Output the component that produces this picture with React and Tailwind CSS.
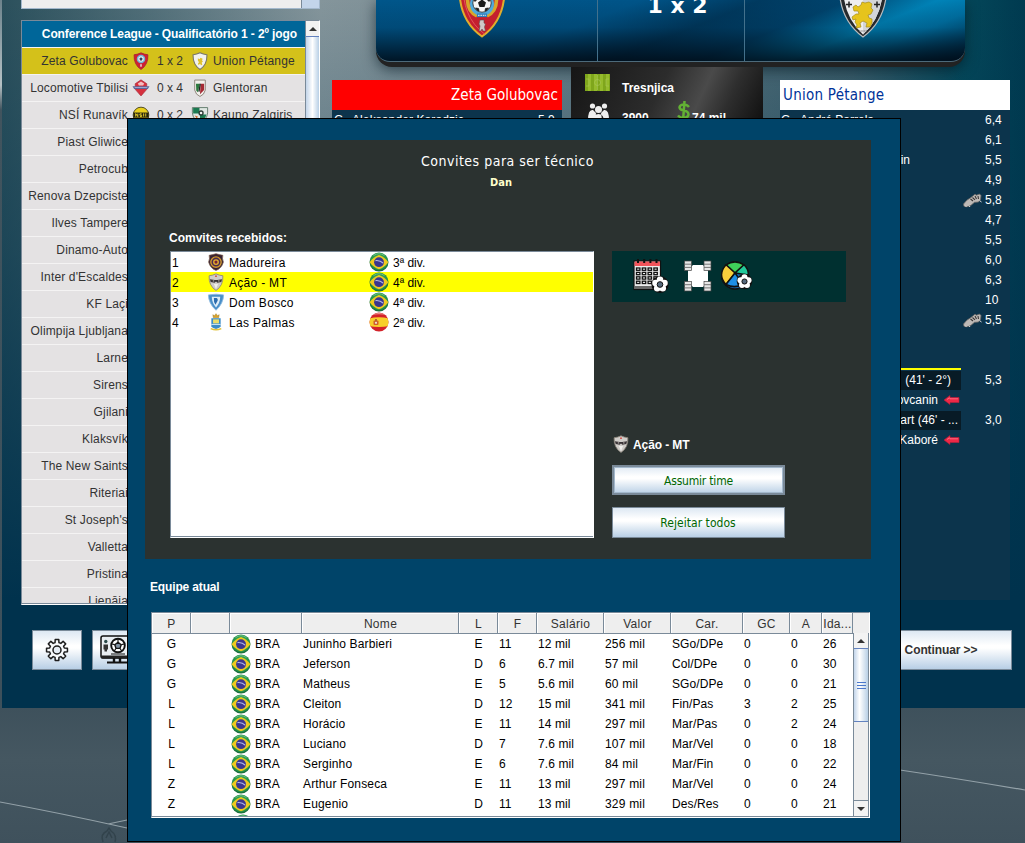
import React from "react";

const ARIAL = "font-['Liberation_Sans',Arial,sans-serif]";
const TAHOMA = "font-['DejaVu_Sans_Condensed','DejaVu_Sans',sans-serif]";

/* ---------- flags and crests ---------- */

function Brazil() {
  return (
    <svg width="20" height="20" viewBox="0 0 20 20" className="block shrink-0">
      <defs>
        <radialGradient id="br" cx=".5" cy=".45" r=".55">
          <stop offset="0" stopColor="#4cc266" />
          <stop offset=".8" stopColor="#259449" />
          <stop offset="1" stopColor="#0f5c34" />
        </radialGradient>
      </defs>
      <circle cx="10" cy="10" r="9.5" fill="url(#br)" />
      <path d="M.6 10.2 Q4.5 5 10 3 Q15.500 5 19.400 10.2 Q15.500 15.400 10 17.200 Q4.500 15.400 .6 10.2Z" fill="#efc91e" />
      <circle cx="10" cy="10.200" r="4.900" fill="#3b3690" />
      <path d="M6.500 8.600 Q11 8 14.200 11.200" stroke="#b4b8e0" strokeWidth="1.200" fill="none" />
      <path d="M4.500 3.600 Q10 -.2 15.500 3.600" stroke="#9fd9ae" strokeWidth="1" fill="none" opacity=".6" />
    </svg>
  );
}

function Spain() {
  return (
    <svg width="20" height="20" viewBox="0 0 20 20" className="block shrink-0">
      <defs>
        <clipPath id="esc"><circle cx="10" cy="10" r="9.5" /></clipPath>
      </defs>
      <g clipPath="url(#esc)">
        <rect width="20" height="20" fill="#d3222a" />
        <path d="M0 6.500Q10 4 20 6.500v7.500Q10 16 0 14z" fill="#f7cf2a" />
        <path d="M2 3Q10-1 18 3 10 1.500 2 3z" fill="#f4b0a8" opacity=".8" />
        <rect x="4.500" y="8.500" width="5" height="4.500" rx="1" fill="#d0602c" />
        <rect x="6" y="7" width="2" height="2" fill="#b8642c" />
        <circle cx="7" cy="10.800" r="1.100" fill="#eee3d0" />
      </g>
    </svg>
  );
}

const SHIELD = "M1.500 2.600 Q5 2.300 8 .8 Q11 2.300 14.500 2.600 Q15 12 8 16.500 Q1 12 1.500 2.600Z";

function Crest({ kind }) {
  return (
    <svg width="18" height="18" viewBox="0 0 16 17" className="block shrink-0">
      {kind === "zeta" && (
        <>
          <path d={SHIELD} fill="#cf1f33" stroke="#a32334" strokeWidth=".8" />
          <circle cx="8" cy="6.600" r="4" fill="#6fb4d4" />
          <circle cx="8" cy="6.600" r="2.600" fill="#e6eef2" />
          <path d="M8 5l1.500 1.200-.6 1.800H7.100L6.500 6.200z" fill="#33415c" />
          <rect x="7.200" y="11.500" width="1.600" height="2.400" fill="#dfc9c9" />
        </>
      )}
      {kind === "union" && (
        <>
          <path d={SHIELD} fill="#f2f2ee" stroke="#77756a" strokeWidth="1" />
          <path d="M6 6l1.500.8L8.500 5.500l2 .8-.6 1.700.9 1-1.200 1 .6 2-1.300.6-.8-1.400-1.500 1-.6-1 1-1.500-1-1.600z" fill="#dfc22c" />
        </>
      )}
      {kind === "loco" && (
        <>
          <path d="M8 .8L13.500 4.500 13.300 10 8 16 2.700 10 2.500 4.500z" fill="#d6303e" stroke="#a32837" strokeWidth=".6" />
          <path d="M5 4.300l3-2 3 2-1 1.800H6z" fill="#f3bcc0" />
          <path d="M0 6.800h16l-1.500 2.700h-13z" fill="#5b6498" />
          <path d="M2 8h12" stroke="#b9bfe2" strokeWidth=".7" />
        </>
      )}
      {kind === "glen" && (
        <>
          <path d="M3 1h10v9.500Q12 15 8 16.500 4 15 3 10.500z" fill="#f3f1ec" stroke="#8b8277" strokeWidth=".9" />
          <path d="M4.200 4.500H8L6 12.500 4.500 11z" fill="#2c7a3e" />
          <path d="M8.600 4.500h3.300v6L8 14.300z" fill="#a52a34" />
          <path d="M8.300 4.500L7 12" stroke="#222" strokeWidth="1.200" />
        </>
      )}
      {kind === "nsi" && (
        <>
          <circle cx="8" cy="8.500" r="7.400" fill="#e9cf1c" stroke="#38340f" strokeWidth=".8" />
          <path d="M.9 6.200h14.200v4.800H.9z" fill="#26240f" />
          <path d="M3 10V7.200l2 2.800V7.200M8.600 7.400H7v1.300h1.600V10H7M10.500 7v3M12.500 7v3" stroke="#ecd42c" strokeWidth=".9" fill="none" />
        </>
      )}
      {kind === "kauno" && (
        <>
          <path d="M.8 1.500h14.400v5Q14.500 13 8 16.500 1.500 13 .8 6.500z" fill="#dfe7e2" stroke="#53705f" strokeWidth=".8" />
          <path d="M1.500 2h6v5h-6zM8 8h6q-1 5-6 7z" fill="#1c7a50" />
          <circle cx="9" cy="6.600" r="2.500" fill="#2b3c36" />
          <circle cx="9" cy="6.600" r="1.200" fill="#f4f6f4" />
          <path d="M3 9l3 1-1 2z" fill="#d66b2c" />
        </>
      )}
      {kind === "madu" && (
        <>
          <path d="M1.500 2.200L5 1.500 8 .6l3 .9 3.500.7Q13.600 5 15 8.500 13.500 14.500 8 16.500 2.500 14.500 1 8.500 2.400 5 1.500 2.200z" fill="#3a2434" stroke="#7a5a46" strokeWidth=".6" />
          <circle cx="8" cy="8.600" r="4.900" fill="#4a2c50" stroke="#d39a2c" strokeWidth="1.300" />
          <circle cx="8" cy="8.600" r="2.800" fill="#e2b02e" />
          <circle cx="8" cy="8.600" r="1.500" fill="#7a2038" />
        </>
      )}
      {kind === "acao" && (
        <>
          <path d={SHIELD} fill="#d0cdc9" stroke="#8a8378" strokeWidth=".8" />
          <path d="M2.200 5.800L7 6.600h2l4.800-.8-.8 2.800-3.600.6L8 8 6.600 9.200 3 8.600z" fill="#3a3436" />
          <path d="M5 7.500h1.300M10 7.500h1.300" stroke="#e8e4e0" strokeWidth=".8" />
          <circle cx="8" cy="3" r=".8" fill="#d04038" />
          <path d="M6 10.500l2 4.500 2-4.500" fill="#f1f0ec" />
        </>
      )}
      {kind === "bosco" && (
        <>
          <path d="M.8 1.800Q8 .4 15.200 1.800 15 10 8 16.300 1 10 .8 1.800z" fill="#4a8fc9" stroke="#8fbbe0" strokeWidth=".8" />
          <path d="M4 3.600h8Q11.800 9.500 8 13.600 4.200 9.500 4 3.600z" fill="#dcecf8" />
          <path d="M6 4.800h2.600q2.200 1.500 0 4.200L7.500 11 6.200 8.600z" fill="#2c6cae" />
        </>
      )}
      {kind === "palmas" && (
        <>
          <path d="M5 1.600l1.500 1L8 .6l1.500 2 1.500-1-.5 3h-5z" fill="#d9a42c" stroke="#93701c" strokeWidth=".4" />
          <path d="M3.600 5h8.800v8Q11 14.500 8 15 5 14.500 3.600 13z" fill="#3a8cc8" />
          <rect x="5.200" y="6" width="5.600" height="3.800" fill="#e8dc6a" />
          <path d="M3.600 10.800h8.800" stroke="#d8ecf8" strokeWidth=".9" />
          <path d="M3 14.800q5 2.200 10 0" stroke="#e0c23c" strokeWidth="1.400" fill="none" />
        </>
      )}
    </svg>
  );
}

function BigZeta() {
  return (
    <svg width="48" height="68" viewBox="0 0 48 68" className="block">
      <path d="M2 10 Q14 8 24 2 Q34 8 46 10 Q50 48 24 66.500 Q-2 48 2 10Z" fill="#c41f2e" stroke="#dfae2c" strokeWidth="2" />
      <path d="M2.500 12Q1 48 24 65" stroke="#e2525a" strokeWidth="1" fill="none" transform="translate(2.500 -1)" />
      <path d="M9.500 28Q9 41 19 46M38.500 28Q39 41 29 46" stroke="#d8a62a" strokeWidth="3.600" fill="none" />
      <circle cx="24" cy="34" r="12" fill="#4fa9dc" />
      <circle cx="24" cy="33" r="9.200" fill="#f5f5f5" stroke="#222" strokeWidth=".8" />
      <path d="M24 29.500l4 3-1.500 4.500h-5L20 32.500z" fill="#1a1a1a" />
      <path d="M15.500 29.500l2.800-2.500.7 2.500-2 2zM32.500 29.500L29.700 27l-.7 2.500 2 2zM17.500 38l3 .5.500 2.500-1.500-.5zM30.500 38l-3 .5-.5 2.500 1.500-.5z" fill="#1a1a1a" stroke="#1a1a1a" strokeWidth=".8" />
      <rect x="19" y="43.500" width="10" height="3.600" fill="#2f7fbc" />
      <path d="M20 45.300h8" stroke="#e6f0f8" strokeWidth="1" strokeDasharray="1.6 .8" />
      <path d="M22 50h4v3l1.500 1-1 3 1 4H25l-1-2-1 2h-2l1-5-1-2z" fill="#cfc8c8" stroke="#64484c" strokeWidth=".6" />
    </svg>
  );
}

function BigUnion() {
  return (
    <svg width="50" height="70" viewBox="0 0 50 70" className="block">
      <path d="M1.500 12 Q14 10 25 2 Q36 10 48.500 12 Q51 50 25 69 Q-1 50 1.500 12Z" fill="#26292c" stroke="#b9bcbe" strokeWidth="1.200" />
      <path d="M5 14 Q16 12 25 6 Q34 12 45 14 Q46 48 25 66.500 Q4 48 5 14Z" fill="#eeeeef" />
      <path d="M25 6 Q34 12 45 14 Q46 48 25 66.500z" fill="#d3d5d8" />
      <path d="M8 36.500h6M11 33.500v6M36 36.500h6M39 33.500v6" stroke="#222" strokeWidth="1.500" />
      <path d="M24 34l3 1 4-1 3 2-1 4 2 2-2 4-3 1 1 3 3 1v4l-2 4h-4l1-4-4-2-3 2 1 4-5 1 1-3-2-3 1-3-3 1-1-3 4-3 3 0-1-3-4 0-1-4 3-2 2 2 3-2z" fill="#e6c41c" stroke="#a88e18" strokeWidth=".7" />
      <path d="M21 63h8" stroke="#777" strokeWidth="1.200" strokeDasharray="1.500 .7" />
    </svg>
  );
}

/* ---------- other drawings ---------- */

function Boot() {
  return (
    <svg width="22" height="18" viewBox="0 0 22 18" className="block shrink-0">
      <path d="M1.500 13Q4 9 9 6.500L13 3.200l1.500 1 3-1.200 1.500 1.500-.5 4-2 2.500-4 .3-3.500 3-4 1.500-3-.5z" fill="#bdb9b6" stroke="#6d6866" strokeWidth=".8" />
      <path d="M8.500 8l2.500 2M10.500 6.500l2.500 2.300M13 5l1.500 3M16 5l.5 3" stroke="#3a3636" strokeWidth="1.100" />
      <path d="M3 14.500l1.500 1.500M7 14.500l1 1.500M17.500 9.500l2 1.500" stroke="#e6e2df" strokeWidth="1" />
    </svg>
  );
}

function RedArrow() {
  return (
    <svg width="17" height="12" viewBox="0 0 17 12" className="block shrink-0">
      <path d="M1 6L7 1.500v2h9v5H7v2z" fill="#ee2846" stroke="#c01c3a" strokeWidth=".6" />
      <path d="M4 5.500L6.500 3.800 7 4.800h8" stroke="#ff6d82" strokeWidth=".9" fill="none" />
    </svg>
  );
}

function Gear() {
  const pts = [];
  for (let i = 0; i < 8; i++) {
    const a = (i * 45 * Math.PI) / 180 - Math.PI / 2;
    [[-0.26, 7.6], [-0.17, 10.6], [0.17, 10.6], [0.26, 7.6]].forEach(([d, r]) =>
      pts.push(`${(12 + r * Math.cos(a + d)).toFixed(2)},${(12 + r * Math.sin(a + d)).toFixed(2)}`)
    );
  }
  return (
    <svg width="24" height="24" viewBox="0 0 24 24" fill="none" stroke="#1e1e1e" strokeWidth="1.500" strokeLinejoin="round">
      <polygon points={pts.join(" ")} fill="#f8fafc" />
      <circle cx="12" cy="12" r="4" fill="#e6edf5" />
    </svg>
  );
}

function Monitor() {
  return (
    <svg width="34" height="30" viewBox="0 0 34 30" className="block">
      <rect x="1" y="1" width="32" height="22" rx="2" fill="#e9eef2" stroke="#111" strokeWidth="1.500" />
      <path d="M1 20.500h32v2q0 1-1 1H2q-1 0-1-1z" fill="#222" />
      <circle cx="5.800" cy="6.500" r="1.700" fill="#2b4a4a" />
      <path d="M3.500 9.500h4.500v5H7v2H4.500v-2h-1z" fill="#333" />
      <circle cx="18" cy="10.500" r="6.800" fill="#fff" stroke="#111" strokeWidth="1.900" />
      <path d="M18 7.300l3.200 2.400-1.200 3.700h-4L14.800 9.700z" fill="#8292a2" stroke="#111" strokeWidth="1.400" />
      <path d="M18 4v3M24 9l-2.500.6M20.200 13.600l1.500 2.400M15.800 13.600L14.300 16M12 9l2.500.6" stroke="#111" strokeWidth="1.100" />
      <path d="M11 19h14M27 5h4M27 9h4" stroke="#111" strokeWidth="1" />
      <path d="M14 23v4M20 23v4" stroke="#111" strokeWidth="2.400" />
      <path d="M7 27.500h20" stroke="#111" strokeWidth="2" />
    </svg>
  );
}

function Ball({ x, y, r }) {
  const petals = [0, 1, 2, 3, 4].map((i) => {
    const a = ((i * 72 - 90) * Math.PI) / 180;
    return <circle key={i} cx={x + Math.cos(a) * r * 0.55} cy={y + Math.sin(a) * r * 0.55} r={r * 0.38} fill="#fff" />;
  });
  return (
    <g>
      <circle cx={x} cy={y} r={r} fill="#111" />
      <circle cx={x} cy={y} r={r * 0.66} fill="#fff" />
      {petals}
      <circle cx={x} cy={y} r={r * 0.33} fill="#56697c" stroke="#111" strokeWidth="1" />
    </g>
  );
}

function CalendarIcon() {
  const cells = [];
  for (let r = 0; r < 4; r++)
    for (let c = 0; c < 4; c++)
      cells.push(<rect key={`${r}-${c}`} x={3.5 + c * 5.8} y={10 + r * 4.4} width="3.4" height="2.300" fill="#fff" stroke="#111" strokeWidth="1.300" />);
  return (
    <svg width="36" height="36" viewBox="0 0 36 36" className="block">
      <rect x="1" y="3" width="26.500" height="28.500" fill="#ececec" stroke="#111" strokeWidth="1.200" />
      <rect x="1.600" y="3.600" width="25.300" height="4.400" fill="#f2545b" />
      <rect x="1.600" y="28" width="25.300" height="3" fill="#6a6a6a" />
      {cells}
      <path d="M5 1v4M11.200 1v4M17.400 1v4M23.500 1v4" stroke="#111" strokeWidth="2" />
      <Ball x={27} y={26.500} r={8.600} />
    </svg>
  );
}

function StadiumIcon() {
  const corner = (x, y) => (
    <g key={`${x}-${y}`}>
      <rect x={x} y={y} width="7" height="9.500" fill="#e6e6e6" stroke="#444" strokeWidth=".7" />
      <path d={`M${x} ${y + 3.2}h7M${x} ${y + 6.4}h7`} stroke="#666" strokeWidth=".9" />
    </g>
  );
  return (
    <svg width="30" height="32" viewBox="0 0 30 32" className="block">
      <path d="M10 5h10l5 5v12l-5 5H10l-5-5V10z" fill="#fff" />
      {corner(1.5, 1)}
      {corner(21, 1)}
      {corner(1.5, 21.5)}
      {corner(21, 21.5)}
    </svg>
  );
}

function ChartIcon() {
  return (
    <svg width="32" height="32" viewBox="0 0 32 32" className="block">
      <g stroke="#111" strokeWidth="1.500" strokeLinejoin="round">
        <circle cx="14" cy="15.500" r="13.400" fill="#1c6fb8" />
        <path d="M14 13L5 4.800Q14-1 23 4.800z" fill="#3fcf5a" />
        <path d="M14 13L5 4.800Q-4 15 5 24.500z" fill="#f8cf3c" />
        <path d="M14 13L23 4.800Q27.500 9 27.400 15z" fill="#22c99a" />
        <path d="M14 13L5 24.500Q14 29 22 24z" fill="#1e8fe6" />
      </g>
      <Ball x={23.500} y={21.500} r={7.800} />
    </svg>
  );
}

function Arrow({ down }) {
  return (
    <svg width="8" height="4" viewBox="0 0 8 4" className="block">
      <path d={down ? "M0 0h8L4 4z" : "M0 4h8L4 0z"} fill="#333" />
    </svg>
  );
}

/* ---------- match panel behind the dialog ---------- */

const MATCHES = [
  ["Zeta Golubovac", "zeta", "1 x 2", "union", "Union Pétange"],
  ["Locomotive Tbilisi", "loco", "0 x 4", "glen", "Glentoran"],
  ["NSÍ Runavík", "nsi", "0 x 2", "kauno", "Kauno Zalgiris"],
  ["Piast Gliwice"], ["Petrocub"], ["Renova Dzepciste"], ["Ilves Tampere"], ["Dinamo-Auto"],
  ["Inter d'Escaldes"], ["KF Laçi"], ["Olimpija Ljubljana"], ["Larne"], ["Sirens"], ["Gjilani"],
  ["Klaksvík"], ["The New Saints"], ["Riteriai"], ["St Joseph's"], ["Valletta"], ["Pristina"], ["Lienāja"],
];

function MatchList() {
  return (
    <div className="mt-[11px] flex h-[585px] w-[299px] border border-[#7a8a99] border-b-white border-r-white bg-[#e4e2e3]">
      <div className="flex w-[283px] flex-col overflow-hidden border-b border-[#7a8a99] text-[12px] text-[#333]">
        <div className="flex h-[26px] shrink-0 items-center justify-end bg-[#006699] pr-[8px] text-[12px] font-bold text-white">
          <span className="whitespace-nowrap tracking-[-0.1px]">Conference League - Qualificatório 1 - 2º jogo</span>
        </div>
        {MATCHES.map(([home, hc, score, ac, away], i) => (
          <div
            key={home}
            className={`flex h-[27px] shrink-0 items-center border-t border-[#f4f3f3] ${i === 0 ? "bg-[#d4c11a]" : ""}`}
          >
            <span className="w-[106px] shrink-0 whitespace-nowrap text-right tracking-[0.15px]">{home}</span>
            {hc && (
              <>
                <span className="ml-[4px]"><Crest kind={hc} /></span>
                <span className="ml-[7px] w-[26px] whitespace-nowrap">{score}</span>
                <span className="ml-[8px]"><Crest kind={ac} /></span>
                <span className="ml-[4px] whitespace-nowrap tracking-[0.2px]">{away}</span>
              </>
            )}
          </div>
        ))}
      </div>
      <div className="flex w-[14px] flex-col border-l border-[#7a8a99] bg-[#eee]">
        <div className="flex h-[16px] items-center justify-center border-b border-[#6382bf] bg-[#f2f2f2]"><Arrow /></div>
        <div className="h-[300px] bg-linear-to-r from-[#c3d5ea] via-white to-[#b8cfe5]" />
      </div>
    </div>
  );
}

const RATINGS = [
  { rating: "6,4", left: true },
  { rating: "6,1" },
  { rating: "5,5", name: "in", pad: "pr-[51px]" },
  { rating: "4,9" },
  { rating: "5,8", boot: true },
  { rating: "4,7" },
  { rating: "5,5" },
  { rating: "6,0" },
  { rating: "6,3" },
  { rating: "10" },
  { rating: "5,5", boot: true },
  {},
  {},
  { rating: "5,3", name: "(41' - 2°)", pad: "pr-[10px]", dark: true, line: true },
  { name: "ovcanin", arrow: true },
  { rating: "3,0", name: "kart (46' - ...", pad: "pr-[3px]", dark: true },
  { name: "Kaboré", arrow: true },
];

function AwayTeam() {
  return (
    <div className="ml-[17px] mt-[13px] w-[230px]">
      <div className={`flex h-[30px] items-center bg-white pl-[3px] pt-[1px] text-[15px] text-[#003399] ${TAHOMA}`}>
        <span className="tracking-[0.25px]">Union Pétange</span>
      </div>
      <div className="h-[490px] bg-[#0c344c] text-[12px] text-white">
        {RATINGS.map((r, i) => (
          <div key={i} className="flex h-[20px] items-center">
            <div
              className={`flex h-[19px] w-[181px] items-center whitespace-nowrap ${r.left ? "" : "justify-end"} ${r.dark ? "bg-[#081b26]" : ""} ${r.line ? "shadow-[0_-1px_0_#0c344c,0_-3px_0_#ffff00]" : ""} ${r.pad || ""}`}
            >
              {r.left && (
                <>
                  <span className="w-[20px] pl-[1px]">G</span>
                  <span>André Parrela</span>
                </>
              )}
              {!r.left && r.name}
              {r.arrow && <span className="ml-[5px] mr-[1px]"><RedArrow /></span>}
            </div>
            <div className="ml-[1px] w-[23px]">{r.boot && <Boot />}</div>
            <span>{r.rating}</span>
          </div>
        ))}
      </div>
    </div>
  );
}

function HomeTeam() {
  return (
    <div className="mt-[13px] w-[230px]">
      <div className={`flex h-[30px] items-center justify-end bg-[#ff0000] pr-[4px] pt-[1px] text-[15px] text-white ${TAHOMA}`}>
        Zeta Golubovac
      </div>
      <div className="flex h-[490px] bg-[#0c344c] px-[2px] text-[12px] leading-[20px] text-white">
        <span className="w-[18px]">G</span>
        <span className="flex-1 tracking-[0.1px]">Aleksander Karadzic</span>
        <span className="w-[22px]">5,9</span>
      </div>
    </div>
  );
}

function StadiumInfo() {
  return (
    <div className="ml-[9px] h-[120px] w-[192px] bg-[linear-gradient(115deg,#161616_0%,#2c2c2c_40%,#4a4a4a_58%,#2e2e2e_70%,#0c0c0c_90%)] pl-[14px] pt-[7px] text-[12px] font-bold text-white">
      <div className="flex h-[25px] items-start">
        <svg width="25" height="17" viewBox="0 0 25 17" className="block">
          <rect width="25" height="17" fill="#7fa61c" />
          <path d="M3 0h3v17H3zM9 0h3v17H9zM15 0h3v17h-3zM21 0h3v17h-3z" fill="#95bb2c" />
          <path d="M12.500 1v15M1 5h3v7H1M24 5h-3v7h3" stroke="#a9c75c" strokeWidth=".6" fill="none" />
          <circle cx="12.500" cy="8.500" r="3" stroke="#a9c75c" strokeWidth=".6" fill="none" />
        </svg>
        <span className="ml-[12px] mt-[5px] leading-[18px]">Tresnjica</span>
      </div>
      <div className="flex h-[28px] items-start">
        <svg width="25" height="22" viewBox="0 0 25 22" className="mt-[3px] block" fill="#eee">
          <circle cx="7.500" cy="4" r="2.600" /><circle cx="19.500" cy="4" r="2.600" /><circle cx="13.500" cy="7.500" r="3.500" />
          <path d="M3 18q0-11 5-10l3 3-1 7zM24 18q0-11-5-10l-3 3 1 7zM8 20q0-8 5.500-8T19 20z" />
        </svg>
        <span className="ml-[12px] mt-[10px] w-[54px] leading-[18px]">3900</span>
        <svg width="15" height="22" viewBox="0 0 15 22" className="mt-px block">
          <path d="M13 7Q11 4.500 7.500 4.500 3.500 5 3.500 7.500 4 10 8 10.500 12.500 11.500 12.500 14.500 12 18 7 18 4 18 2 15.500M8.500 1l-1.500 20" stroke="#62b134" strokeWidth="2.500" fill="none" />
        </svg>
        <span className="ml-px mt-[10px] leading-[18px]">74 mil</span>
      </div>
    </div>
  );
}

function Scoreboard() {
  const cell = "flex justify-center";
  return (
    <div className="ml-[45px] h-[67px] w-[589px] overflow-hidden rounded-b-[16px] bg-[#222] pb-[5px] shadow-[0_3px_14px_rgba(0,20,30,.6)]">
      <div className="flex h-[62px] overflow-hidden rounded-b-[14px] border-b border-[#4d6a7a] bg-[linear-gradient(180deg,rgba(0,10,20,0)_0%,rgba(0,10,20,.15)_45%,rgba(0,10,20,.85)_100%),linear-gradient(158deg,#00568a_0%,#005488_36%,#003a60_52%,#00446e_64%,#0083b8_76%,#0074a8_84%,#002744_100%)]">
        <div className={`${cell} w-[222px] border-r border-[#43718c] pr-[9px]`}>
          <div className="-mt-[30px]"><BigZeta /></div>
        </div>
        <div className={`${cell} w-[147px] border-r border-[#43718c]`}>
          <span className="-mt-[9px] pl-[13px] font-['DejaVu_Sans',sans-serif] text-[22px] font-bold leading-[30px] text-white">1 x 2</span>
        </div>
        <div className={`${cell} w-[220px] pl-[15px]`}>
          <div className="-mt-[32px]"><BigUnion /></div>
        </div>
      </div>
    </div>
  );
}

const METAL = "bg-[linear-gradient(180deg,#dde8f3_0%,#ffffff_38%,#ffffff_45%,#b8cfe5_100%)] border border-[#7a8a99]";

function GameWindow() {
  return (
    <div className="ml-[2px] flex h-[708px] bg-[linear-gradient(180deg,transparent_0,rgba(0,50,77,.35)_250px,#00324d_600px),linear-gradient(90deg,#2b505c_0px,#4f6d77_140px,#84959b_318px,#7d8f96_420px,#5c7680_640px,#3d5f6c_850px,#04485a_960px,#003a50_1023px)]">
      <div className="flex w-[329px] shrink-0 flex-col pl-[19px]">
        <div className="flex h-[9px] w-[299px] border border-t-0 border-[#a3b8cc] bg-[#eee]">
          <div className="flex-1" />
          <div className="w-[18px] border-l border-[#7a8a99] bg-[#c3d5ea]" />
        </div>
        <MatchList />
        <div className="mt-[25px] flex gap-[10px] pl-[11px]">
          <div className={`flex h-[40px] w-[50px] items-center justify-center ${METAL}`}><Gear /></div>
          <div className={`flex h-[40px] w-[50px] items-center justify-center ${METAL}`}><Monitor /></div>
        </div>
      </div>
      <div className="flex w-[694px] flex-col">
        <Scoreboard />
        <div className="flex h-[563px] items-start pl-[1px]">
          <HomeTeam />
          <StadiumInfo />
          <AwayTeam />
        </div>
        <div className="flex justify-end pr-[13px]">
          <div className={`flex h-[40px] w-[142px] items-center justify-center text-[12px] font-bold text-[#333] ${METAL}`}>
            <span className="tracking-[-0.1px]">Continuar &gt;&gt;</span>
          </div>
        </div>
      </div>
    </div>
  );
}

/* ---------- dialog ---------- */

const INVITES = [
  ["1", "madu", "Madureira", "br", "3ª div."],
  ["2", "acao", "Ação - MT", "br", "4ª div."],
  ["3", "bosco", "Dom Bosco", "br", "4ª div."],
  ["4", "palmas", "Las Palmas", "es", "2ª div."],
];

const COLS = "grid-cols-[39px_39px_72px_157px_39px_39px_67px_67px_72px_47px_32px_31px]";
const HEADERS = ["P", "", "", "Nome", "L", "F", "Salário", "Valor", "Car.", "GC", "A", "Ida..."];
const PLAYERS = [
  ["G", "Juninho Barbieri", "E", "11", "12 mil", "256 mil", "SGo/DPe", "0", "0", "26"],
  ["G", "Jeferson", "D", "6", "6.7 mil", "57 mil", "Col/DPe", "0", "0", "30"],
  ["G", "Matheus", "E", "5", "5.6 mil", "60 mil", "SGo/DPe", "0", "0", "21"],
  ["L", "Cleiton", "D", "12", "15 mil", "341 mil", "Fin/Pas", "3", "2", "25"],
  ["L", "Horácio", "E", "11", "14 mil", "297 mil", "Mar/Pas", "0", "2", "24"],
  ["L", "Luciano", "D", "7", "7.6 mil", "107 mil", "Mar/Vel", "0", "0", "18"],
  ["L", "Serginho", "E", "6", "7.6 mil", "84 mil", "Mar/Fin", "0", "0", "22"],
  ["Z", "Arthur Fonseca", "E", "11", "13 mil", "297 mil", "Mar/Vel", "0", "0", "24"],
  ["Z", "Eugenio", "D", "11", "13 mil", "329 mil", "Des/Res", "0", "0", "21"],
];

function SquadTable() {
  return (
    <div className="ml-[6px] mt-[17px] flex h-[206px] w-[719px] border border-[#7a8a99] border-b-white border-r-white bg-white text-[12px] text-black">
      <div className="flex w-[701px] flex-col overflow-hidden border-b border-[#7a8a99]">
        <div className={`grid h-[21px] shrink-0 ${COLS} bg-[#eee] text-[#333]`}>
          {HEADERS.map((h, i) => (
            <div
              key={i}
              className="flex items-center justify-center overflow-hidden whitespace-nowrap border-b border-r border-[#7a8a99] pl-[1px] pt-[1px] tracking-[0.3px] shadow-[inset_1px_1px_0_#fff]"
            >
              {h}
            </div>
          ))}
        </div>
        {PLAYERS.map((p, i) => (
          <div key={i} className={`grid h-[20px] shrink-0 ${COLS} items-center whitespace-nowrap`}>
            <span className="text-center">{p[0]}</span>
            <span />
            <span className="flex items-center gap-[4px] pl-[1px]"><Brazil />BRA</span>
            <span className="pl-[1px] tracking-[0.15px]">{p[1]}</span>
            <span className="text-center">{p[2]}</span>
            <span className="pl-[1px]">{p[3]}</span>
            <span className="pl-[1px] tracking-[0.1px]">{p[4]}</span>
            <span className="pl-[1px] tracking-[0.2px]">{p[5]}</span>
            <span className="pl-[1px] tracking-[0.1px]">{p[6]}</span>
            <span className="pl-[1px]">{p[7]}</span>
            <span className="pl-[1px]">{p[8]}</span>
            <span className="pl-[1px]">{p[9]}</span>
          </div>
        ))}
        <div className="shrink-0 pl-[81px]"><Brazil /></div>
      </div>
      <div className="flex w-[16px] flex-col border-b border-[#7a8a99]">
        <div className="h-[20px] shrink-0 bg-[#eee]" />
        <div className="flex min-h-0 flex-1 flex-col border-x border-[#7a8a99] bg-[#eee]">
          <div className="flex h-[15px] shrink-0 items-center justify-center bg-[#f3f3f3]"><Arrow /></div>
          <div className="flex h-[74px] shrink-0 flex-col items-center justify-center gap-[2px] border-y border-[#6382bf] bg-[linear-gradient(90deg,#c3d5ea,#ffffff_40%,#b8cfe5)]">
            <div className="h-[1px] w-[9px] bg-[#4a78cc]" />
            <div className="h-[1px] w-[9px] bg-[#4a78cc]" />
            <div className="h-[1px] w-[9px] bg-[#4a78cc]" />
          </div>
          <div className="flex-1" />
          <div className="flex h-[16px] shrink-0 items-center justify-center border-t border-[#7a8a99] bg-[#f3f3f3]"><Arrow down /></div>
        </div>
      </div>
    </div>
  );
}

function Dialog() {
  return (
    <div className="absolute left-[127px] top-[118px] flex h-[724px] w-[774px] flex-col border border-black bg-[#004469] px-[17px] pt-[21px]">
      <div className="-mr-[12px] flex h-[419px] w-[726px] flex-col bg-[#2b3230] text-white">
        <div className={`flex flex-col items-center pr-[1px] pt-[12px] ${TAHOMA}`}>
          <span className="text-[14px] leading-[18px] tracking-[0.5px]">Convites para ser técnico</span>
          <span className="mr-[13px] mt-[6px] text-[11px] font-bold leading-[14px] text-[#ffffcc]">Dan</span>
        </div>
        <div className="flex pl-[25px]">
          <div className="w-[424px]">
            <div className="mt-[40px] h-[21px] -ml-[1px] text-[12px] font-bold leading-[16px]">Comvites recebidos:</div>
            <div className="flex h-[287px] flex-col border border-[#7a8a99] border-b-white border-r-white bg-white text-[12px] text-black">
              {INVITES.map(([n, crest, name, flag, div]) => (
                <div key={n} className={`flex h-[20px] items-center whitespace-nowrap ${n === "2" ? "bg-[#ffff00]" : ""}`}>
                  <span className="w-[36px] pl-[1px] pt-[1px]">{n}</span>
                  <Crest kind={crest} />
                  <span className="w-[144px] pl-[4px] pt-[1px] tracking-[0.3px]">{name}</span>
                  {flag === "br" ? <Brazil /> : <Spain />}
                  <span className="pl-[4px] pt-[1px]">{div}</span>
                </div>
              ))}
              <div className="flex-1 border-b border-[#7a8a99]" />
            </div>
          </div>
          <div className="ml-[18px] mt-[61px] w-[234px]">
            <div className="flex h-[51px] bg-[#003030] pl-[21px] pt-[7px]">
              <CalendarIcon />
              <span className="ml-[14px] mt-[2px]"><StadiumIcon /></span>
              <span className="ml-[8px] mt-[2px]"><ChartIcon /></span>
            </div>
            <div className="mt-[133px] flex h-[18px] items-center gap-[3px] text-[12px] font-bold">
              <Crest kind="acao" />
              <span className="pt-[1px] tracking-[-0.1px]">Ação - MT</span>
            </div>
            <div className={`mt-[12px] flex h-[30px] w-[173px] items-center justify-center pt-[1px] text-[12px] tracking-[-0.2px] text-[#006600] shadow-[inset_0_0_0_1px_#7a8a99,inset_0_0_0_2px_#a3b8cc] ${METAL} ${TAHOMA}`}>
              Assumir time
            </div>
            <div className={`mt-[12px] flex h-[31px] w-[173px] items-center justify-center pr-[1px] pt-[1px] text-[12px] tracking-[0.05px] text-[#006600] ${METAL} ${TAHOMA}`}>
              Rejeitar todos
            </div>
          </div>
        </div>
      </div>
      <div className="ml-[5px] mt-[20px] h-[16px] text-[12px] font-bold leading-[16px] tracking-[-0.15px] text-white">Equipe atual</div>
      <SquadTable />
    </div>
  );
}

export default function App() {
  return (
    <div className={`relative h-[843px] w-[1025px] overflow-hidden bg-[linear-gradient(180deg,#6d838c_0px,#b5c1c4_85px,#41545e_110px,#3d505b_700px,#455761_760px,#3f515c_843px)] ${ARIAL}`}>
      <GameWindow />
      <svg width="1025" height="135" viewBox="0 0 1025 135" className="block" fill="none">
        <path d="M0 94Q60 105 127 120M127 112L108 116" stroke="#93a1a8" strokeWidth="1.200" />
        <path d="M900 62Q960 71 1025 82" stroke="#93a1a8" strokeWidth="1.200" />
        <path d="M103 134q-3-8 4-11l2-3 2 3q6 4 4 11M106 130l3-6 3 6" stroke="#32434c" strokeWidth="1.500" />
      </svg>
      <Dialog />
    </div>
  );
}
